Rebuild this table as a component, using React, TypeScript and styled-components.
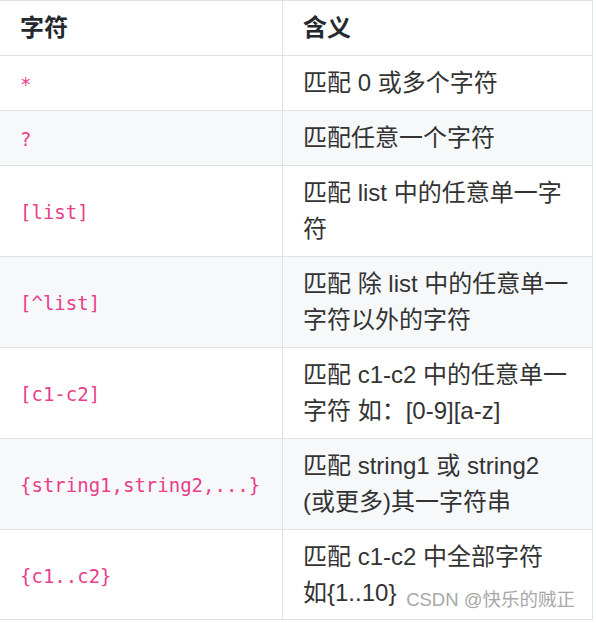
import React from 'react';
import styled, { createGlobalStyle } from 'styled-components';

const GlobalStyle = createGlobalStyle`
  html, body {
    margin: 0;
    padding: 0;
    background: #ffffff;
  }
`;

const Wrapper = styled.div`
  position: relative;
  width: 593px;
  font-family: 'Liberation Sans', 'Noto Sans CJK SC', sans-serif;
`;

const Table = styled.table`
  width: 593px;
  table-layout: fixed;
  border-collapse: separate;
  border-spacing: 0;
`;

const Row = styled.tr<{ $striped?: boolean }>`
  background: ${(p) => (p.$striped ? '#f6f8fa' : '#ffffff')};
`;

const HeadCell = styled.th<{ $side?: boolean }>`
  box-sizing: border-box;
  width: ${(p) => (p.$side ? '311px' : '282px')};
  height: 55px;
  padding: 0 4px 0 20px;
  border-top: 1px solid #dfe2e5;
  border-left: ${(p) => (p.$side ? '1px solid #dfe2e5' : 'none')};
  border-right: ${(p) => (p.$side ? '1px solid #dfe2e5' : 'none')};
  text-align: left;
  font-size: 24px;
  line-height: 36px;
  font-weight: 700;
  color: #24292e;
`;

const Cell = styled.td<{ $side?: boolean; $last?: boolean; $tall?: boolean }>`
  box-sizing: border-box;
  height: ${(p) => (p.$tall ? '91px' : '55px')};
  padding: 0 4px 0 20px;
  border-top: 1px solid #dfe2e5;
  border-bottom: ${(p) => (p.$last ? '1px solid #dfe2e5' : 'none')};
  border-left: ${(p) => (p.$side ? '1px solid #dfe2e5' : 'none')};
  border-right: ${(p) => (p.$side ? '1px solid #dfe2e5' : 'none')};
  vertical-align: middle;
  font-size: 24px;
  line-height: 36px;
  color: #333333;
`;

const Code = styled.code`
  font-family: 'DejaVu Sans Mono', 'Liberation Mono', monospace;
  font-size: 19px;
  line-height: 1;
  color: #e83e8c;
`;

const Watermark = styled.span`
  position: absolute;
  right: 18px;
  bottom: 9px;
  font-size: 18.5px;
  line-height: 22px;
  color: #a8a8a8;
  pointer-events: none;
`;

const rows: { code: string; meaning: string[] }[] = [
  { code: '*', meaning: ['匹配 0 或多个字符'] },
  { code: '?', meaning: ['匹配任意一个字符'] },
  { code: '[list]', meaning: ['匹配 list 中的任意单一字', '符'] },
  { code: '[^list]', meaning: ['匹配 除 list 中的任意单一', '字符以外的字符'] },
  { code: '[c1-c2]', meaning: ['匹配 c1-c2 中的任意单一', '字符 如：[0-9][a-z]'] },
  { code: '{string1,string2,...}', meaning: ['匹配 string1 或 string2', '(或更多)其一字符串'] },
  { code: '{c1..c2}', meaning: ['匹配 c1-c2 中全部字符', '如{1..10}'] },
];

export default function App() {
  return (
    <Wrapper>
      <GlobalStyle />
      <Table>
        <thead>
          <Row>
            <HeadCell>字符</HeadCell>
            <HeadCell $side>含义</HeadCell>
          </Row>
        </thead>
        <tbody>
          {rows.map((row, i) => {
            const last = i === rows.length - 1;
            const tall = row.meaning.length > 1;
            return (
              <Row key={row.code} $striped={i % 2 === 1}>
                <Cell $last={last} $tall={tall}>
                  <Code>{row.code}</Code>
                </Cell>
                <Cell $side $last={last} $tall={tall}>
                  {row.meaning.map((line, j) => (
                    <React.Fragment key={line}>
                      {j > 0 && <br />}
                      {line}
                    </React.Fragment>
                  ))}
                </Cell>
              </Row>
            );
          })}
        </tbody>
      </Table>
      <Watermark>CSDN @快乐的贼正</Watermark>
    </Wrapper>
  );
}
